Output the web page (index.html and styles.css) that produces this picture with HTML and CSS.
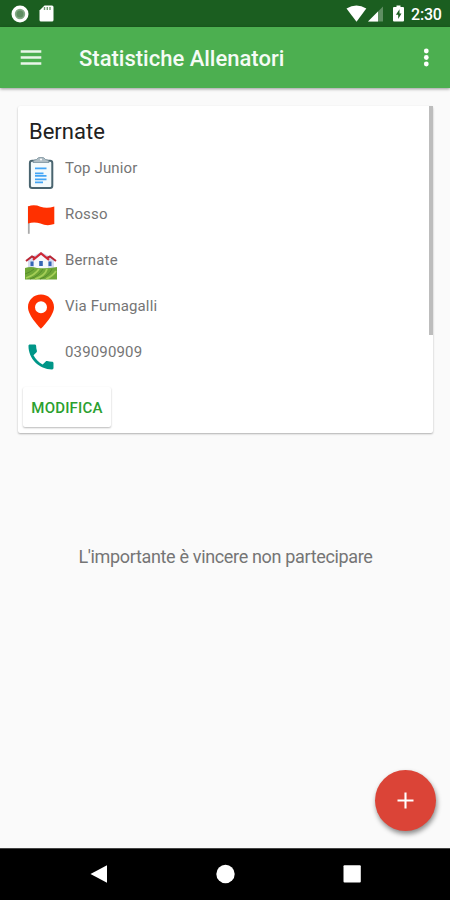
FILE: index.html
```
<!DOCTYPE html>
<html lang="it">
<head>
  <meta charset="UTF-8" />
  <meta name="viewport" content="width=device-width, initial-scale=1.0"/>
  <title>Statistiche Allenatori</title>

  <link rel="stylesheet" href="styles.css">
</head>

<body>
  <div class="status-bar">
    <svg class="status-left" width="50" height="27" viewBox="0 0 50 27">
      <circle cx="12" cy="14" r="8.500" fill="#fff"/>
      <circle cx="12" cy="14" r="5.200" fill="#83a985"/>
      <circle cx="12" cy="14" r="3.500" fill="#5f8d62"/>
      <path d="M36.500 5.500h7.500q1.500 0 1.500 1.500v13q0 1.500-1.500 1.500H33q-1.500 0-1.500-1.500V10.500z" fill="#fff"/>
      <path d="M36.500 7v3M39.300 7v3M42 7v3" stroke="#6f9c72" stroke-width="1.400"/>
    </svg>
    <svg width="60" height="27" viewBox="0 0 60 27">
      <path d="M.5 8.500Q10.500 2.500 20.300 8.500L10.500 21.700z" fill="#fff"/>
      <path d="M37 6.500v15H22z" fill="#5f8f62"/>
      <path d="M32 11.500v10H22z" fill="#fff"/>
      <path d="M50.500 5.500h4V7H57q1 0 1 1v12.500q0 1-1 1h-9q-1 0-1-1V8q0-1 1-1h2.500z" fill="#fff"/>
      <path d="M53.500 9.200l-3.600 5.600h2.300v4.200l3.300-5.600h-2z" fill="#1b5e20"/>
    </svg>
    <span class="clock">2:30</span>
  </div>

  <header>
    <svg class="menu" width="22" height="16" viewBox="0 0 22 16">
      <path d="M.7 1.500h20.600M.7 7.500h20.600M.7 13.500h20.600" stroke="#e9f6e9" stroke-width="2.300"/>
    </svg>
    <h1>Statistiche Allenatori</h1>
    <svg class="more" width="6" height="20" viewBox="0 0 6 20">
      <circle cx="3.300" cy="3" r="2.400" fill="#fff"/>
      <circle cx="3.300" cy="9.500" r="2.400" fill="#fff"/>
      <circle cx="3.300" cy="16" r="2.400" fill="#fff"/>
    </svg>
  </header>

  <main>
    <section class="card">
      <h2>Bernate</h2>
      <ul class="details">
        <li>
          <svg width="32" height="32" viewBox="0 0 32 32">
            <rect x="4.900" y="3.700" width="22.400" height="27.300" rx="2.200" fill="#f3fafc" stroke="#49646f" stroke-width="2"/>
            <path d="M8 5.500q0-3 3.500-3 1-2.200 4.500-2.200t4.500 2.200q3.500 0 3.500 3z" fill="#b0bec5" stroke="#78909c" stroke-width=".8"/>
            <circle cx="16" cy="2.600" r="1" fill="#fff"/>
            <path d="M10 11.300h11.500M10 16.300h8.500M10 18.800h11.500M10 22.300h11.500M10 25.300h8" stroke="#42a5f5" stroke-width="1.700"/>
          </svg>
          <span>Top Junior</span>
        </li>
        <li>
          <svg width="32" height="32" viewBox="0 0 32 32">
            <path d="M3.800 3v27.800" stroke="#aaa" stroke-width="1.800"/>
            <path d="M3 3.500Q9 1 15.500 3.800 22 6 29.300 3.500v17.500Q22 23.500 15.500 20.500 9 18.500 3 20.500z" fill="#ff3000"/>
          </svg>
          <span>Rosso</span>
        </li>
        <li>
          <svg width="32" height="32" viewBox="0 0 32 32">
            <path d="M3 11l5-4 8-4 8 4 5 4v8H3z" fill="#d5dcf0"/>
            <path d="M9 20V10l7-5 7 5v10z" fill="#f5f7fc"/>
            <path d="M1 12l6-4.500 3 1.500M31 12l-6-4.500-3 1.500" fill="none" stroke="#b92735" stroke-width="2"/>
            <path d="M8 10.800l8-6.300 8 6.300" fill="none" stroke="#cf2837" stroke-width="2.200"/>
            <path d="M5.500 12.500h3V17h-3zM14.200 12h3.600v5h-3.600zM23.500 12.500h3V17h-3z" fill="#3565b5"/>
            <path d="M0 19q6-2 12 0 10 1 20-1v12.500H0z" fill="#6fa737"/>
            <path d="M1 29Q10 26 14 20M10 30Q20 27 22 20M21 30Q28 27 31 22" fill="none" stroke="#a5ce57" stroke-width="1.800"/>
            <path d="M0 25Q6 23 9 20M5 30Q14 27 18 20M15 30Q24 27 27 20" fill="none" stroke="#568c2b" stroke-width="1"/>
          </svg>
          <span>Bernate</span>
        </li>
        <li>
          <svg class="pin" width="32" height="36" viewBox="0 0 32 36">
            <path fill-rule="evenodd" d="M16 .5C8.800 .5 3 6 3 13.200 3 22 16 34.700 16 34.700S29 22 29 13.200C29 6 23.200 .5 16 .5zm0 6.700a6 6 0 1 1 0 12 6 6 0 0 1 0-12z" fill="#ff3000"/>
          </svg>
          <span>Via Fumagalli</span>
        </li>
        <li>
          <svg width="32" height="32" viewBox="0 0 32 32">
            <path transform="translate(-.7 -.7) scale(1.390)" d="M6.620 10.790c1.440 2.830 3.760 5.140 6.590 6.590l2.200-2.200c.27-.27.67-.36 1.020-.24 1.120.37 2.330.57 3.570.57.550 0 1 .45 1 1V20c0 .55-.45 1-1 1-9.390 0-17-7.610-17-17 0-.55.450-1 1-1h3.500c.55 0 1 .45 1 1 0 1.250.2 2.450.57 3.570.110.350.030.740-.25 1.020l-2.200 2.200z" fill="#009688"/>
          </svg>
          <span>039090909</span>
        </li>
      </ul>
      <button type="button">MODIFICA</button>
      <div class="scrollbar"></div>
    </section>

    <p class="motto">L'importante è vincere non partecipare</p>
  </main>

  <div class="fab">
    <svg width="17" height="17" viewBox="0 0 17 17">
      <path d="M8.500 .5v16M.5 8.500h16" stroke="#fff" stroke-width="2.100"/>
    </svg>
  </div>

  <nav>
    <svg width="20" height="20" viewBox="0 0 20 20">
      <path d="M1.500 10L18 1.200v17.600z" fill="#fff"/>
    </svg>
    <svg width="20" height="20" viewBox="0 0 20 20">
      <circle cx="9.500" cy="10" r="9.200" fill="#fff"/>
    </svg>
    <svg width="20" height="20" viewBox="0 0 20 20">
      <rect x="1.500" y="1.300" width="17.300" height="17.300" rx="1" fill="#fff"/>
    </svg>
  </nav>
</body>
</html>
```
FILE: styles.css
```
* {
  box-sizing: border-box;
}

body {
  font-family: Roboto, sans-serif;
  margin: 0;
  height: 900px;
  display: flex;
  flex-direction: column;
  background: #fafafa;
  color: #757575;
  overflow: hidden;
}

svg {
  display: block;
  flex-shrink: 0;
}

.status-bar {
  display: flex;
  align-items: center;
  height: 27px;
  padding: 0 8px;
  background: #1b5e20;
}

.status-left {
  margin-right: auto;
}

.clock {
  width: 31px;
  margin-left: 5px;
  padding-top: 2px;
  font-size: 16px;
  font-weight: 500;
  line-height: 20px;
  letter-spacing: -0.2px;
  color: #fff;
  white-space: nowrap;
}

header {
  display: flex;
  align-items: center;
  height: 61px;
  padding: 0 21px 0 20px;
  background: #4caf50;
  box-shadow: 0 1px 3px rgba(0, 0, 0, 0.4);
}

header h1 {
  margin: 2px 0 0 37px;
  font-size: 22px;
  font-weight: 500;
  line-height: 28px;
  color: #f5fbf5;
  white-space: nowrap;
}

.more {
  margin-left: auto;
}

main {
  flex: 1;
  padding: 18px 17px 0 18px;
}

.card {
  position: relative;
  height: 327px;
  padding: 12px 5px 0;
  background: #fff;
  border-radius: 2px;
  box-shadow: 0 1px 2px rgba(0, 0, 0, 0.3);
}

.card h2 {
  margin: 0 0 11px 6px;
  font-size: 22px;
  font-weight: 400;
  line-height: 28px;
  color: #212121;
}

.details {
  margin: 0;
  padding: 0 0 0 2px;
  list-style-type: none;
}

.details li {
  display: flex;
  height: 46px;
  gap: 8px;
}

.details span {
  font-size: 15px;
  line-height: 22px;
  letter-spacing: 0.15px;
}

.pin {
  margin-top: -1px;
}

.card button {
  display: block;
  width: 88px;
  height: 40px;
  padding: 2px 0 0;
  border: none;
  border-radius: 2px;
  background: #fff;
  box-shadow: 0 1px 2px rgba(0, 0, 0, 0.28);
  font-family: inherit;
  font-size: 15px;
  font-weight: 500;
  letter-spacing: 0.2px;
  color: #2ba02f;
}

/* scroll thumb over the right edge of the card */
.scrollbar {
  position: absolute;
  top: 0;
  right: 0;
  width: 4px;
  height: 229px;
  background: #bdbdbd;
}

.motto {
  margin: 112px 0 0;
  font-size: 18px;
  line-height: 24px;
  letter-spacing: -0.34px;
  text-align: center;
  white-space: nowrap;
}

.fab {
  position: absolute;
  left: 375px;
  top: 770px;
  width: 61px;
  height: 61px;
  display: flex;
  align-items: center;
  justify-content: center;
  border-radius: 50%;
  background: #db4437;
  box-shadow: 1px 3px 5px rgba(0, 0, 0, 0.45);
}

nav {
  display: flex;
  justify-content: space-between;
  align-items: center;
  height: 52px;
  padding: 0 88px 2px 89px;
  border-top: 1px solid #444;
  background: #000;
}
```
